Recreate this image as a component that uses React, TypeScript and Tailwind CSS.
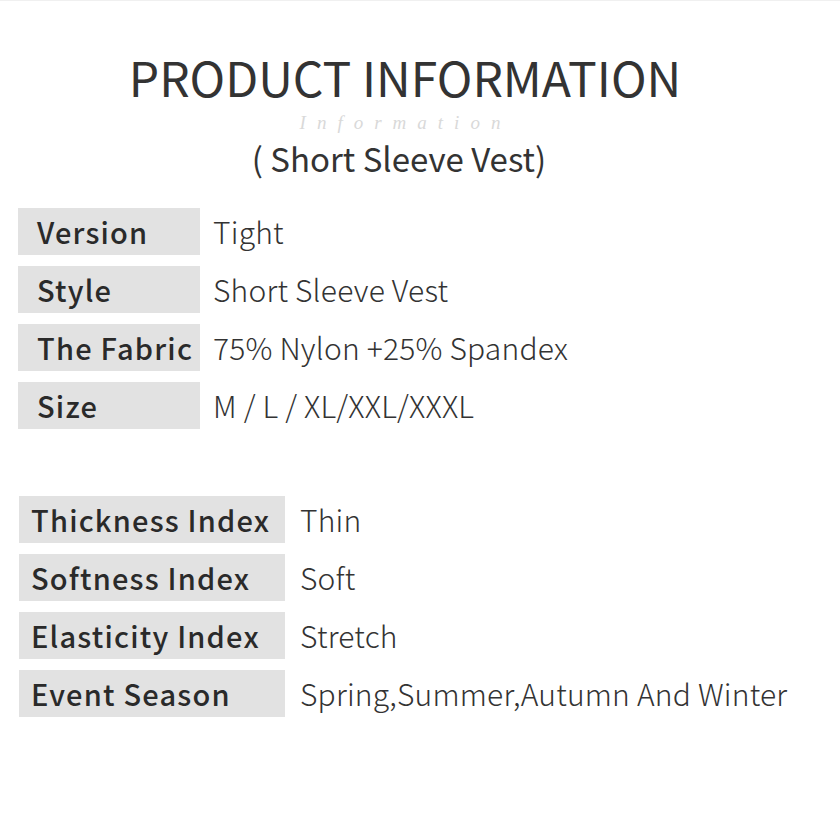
import React from "react";

const rows1 = [
  ["Version", "Tight"],
  ["Style", "Short Sleeve Vest"],
  ["The Fabric", "75% Nylon +25% Spandex"],
  ["Size", "M / L / XL/XXL/XXXL"],
];

const rows2 = [
  ["Thickness Index", "Thin"],
  ["Softness Index", "Soft"],
  ["Elasticity Index", "Stretch"],
  ["Event Season", "Spring,Summer,Autumn And Winter"],
];

const base = { fontFamily: '"Noto Sans CJK SC", "Noto Sans", sans-serif' };
const medium = {
  fontFamily: '"Noto Sans CJK SC Medium", "Noto Sans CJK SC", "Noto Sans", sans-serif',
};
const light = {
  fontFamily: '"Noto Sans CJK SC Light", "Noto Sans CJK SC", "Noto Sans", sans-serif',
};

function Row({
  k,
  v,
  w,
  pl,
  gap,
}: {
  k: string;
  v: string;
  w: string;
  pl: string;
  gap: string;
}) {
  return (
    <div className="flex items-center h-[47px]">
      <div
        className={`${w} ${pl} h-[47px] bg-[#e2e2e2] leading-[47px] text-[29px] font-medium tracking-[1.2px] whitespace-nowrap text-[#2a2a2a]`}
        style={medium}
      >
        {k}
      </div>
      <div
        className={`${gap} text-[30px] leading-[43px] font-light tracking-[0.2px] whitespace-nowrap text-[#333333]`}
        style={light}
      >
        {v}
      </div>
    </div>
  );
}

export default function App() {
  return (
    <div
      className="w-[840px] h-[840px] bg-white border-t border-[#f0f0f0] flex flex-col text-[#333333] overflow-hidden"
      style={base}
    >
      <div className="mt-[40px] h-[70px] leading-[70px] text-[48px] text-center font-normal text-[#333333] pr-[30px]">
        PRODUCT INFORMATION
      </div>
      <div
        className="h-[23px] leading-[23px] text-center text-[19px] italic text-[#d9d9d9] tracking-[11px] pr-[29px]"
        style={{ fontFamily: '"Liberation Serif", serif' }}
      >
        Information
      </div>
      <div className="h-[48px] leading-[48px] text-[33px] text-center font-normal pr-[42px]">
        ( Short Sleeve Vest)
      </div>

      <div className="mt-[26px] flex flex-col gap-[11px] pl-[18px]">
        {rows1.map(([k, v]) => (
          <Row key={k} k={k} v={v} w="w-[182px]" pl="pl-[19px]" gap="ml-[13px]" />
        ))}
      </div>

      <div className="mt-[67px] flex flex-col gap-[11px] pl-[19px]">
        {rows2.map(([k, v]) => (
          <Row key={k} k={k} v={v} w="w-[266px]" pl="pl-[12px]" gap="ml-[15px]" />
        ))}
      </div>
    </div>
  );
}
